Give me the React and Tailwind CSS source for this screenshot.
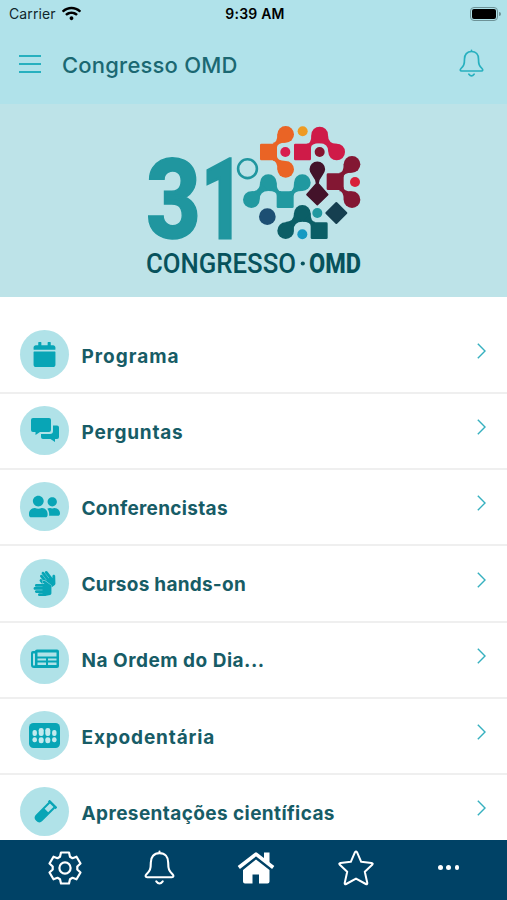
import React from "react";
import { FaCalendar, FaUserFriends, FaWifi, FaSignLanguage } from "react-icons/fa";

function CommentsIcon({ className }) {
  return (
    <svg viewBox="0 0 28 25" fill="currentColor" className={className}>
      <path d="M2 0H18Q20 0 20 2V12Q20 14 18 14H9L4.500 17V14H2Q0 14 0 12V2Q0 0 2 0Z" />
      <path d="M22 7.500H26Q28 7.500 28 9.500V19Q28 21 26 21H24V24L19.500 21H12Q10 21 10 19V16H19Q22 16 22 13Z" />
    </svg>
  );
}

function NewspaperIcon({ className }) {
  return (
    <svg viewBox="0 0 28 20" className={className}>
      <path fill="currentColor" fillRule="evenodd" d="M6 .5H26Q28 .5 28 2.500V17Q28 19 26 19H3Q0 19 0 16V4Q0 2 2 2H4Q4 .5 6 .5ZM6.500 3.500V7.500H25.500V3.500ZM6.500 9.500V11.500H15V9.500ZM17 9.500V11.500H25.500V9.500ZM6.500 13.500V16H15V13.500ZM17 13.500V16H25.500V13.500ZM2 4.500V16Q3 17.300 4 16V4.500Z" />
    </svg>
  );
}

function TeethIcon({ className }) {
  return (
    <svg viewBox="0 0 31 25" className={className}>
      <rect width="31" height="25" rx="4.500" fill="currentColor" />
      <g fill="#c4eaee">
        <rect x="3.500" y="7" width="4.400" height="6" rx="2" />
        <rect x="9.700" y="5" width="5" height="8" rx="2.300" />
        <rect x="16.300" y="5" width="5" height="8" rx="2.300" />
        <rect x="23.100" y="7" width="4.400" height="6" rx="2" />
        <rect x="3.500" y="14.300" width="4.400" height="5" rx="2" />
        <rect x="9.700" y="14.300" width="5" height="6" rx="2.300" />
        <rect x="16.300" y="14.300" width="5" height="6" rx="2.300" />
        <rect x="23.100" y="14.300" width="4.400" height="5" rx="2" />
      </g>
    </svg>
  );
}

function VialIcon({ className }) {
  return (
    <svg viewBox="0 0 24 24" className={className}>
      <g transform="rotate(45 12 12)">
        <path fill="currentColor" fillRule="evenodd" d="M6.500 0H17.500V2.500H16.500V20Q16.500 24.500 12 24.500Q7.500 24.500 7.500 20V2.500H6.500ZM9.500 2.500V10H14.500V2.500Z" />
      </g>
    </svg>
  );
}

function BellIcon({ className, strokeWidth }) {
  return (
    <svg viewBox="-.5 -.5 25 29" fill="none" stroke="currentColor" strokeWidth={strokeWidth} strokeLinecap="round" strokeLinejoin="round" className={className}>
      <path d="M12 .8V2M12 2C7.500 2 5 5.200 5 9.500C5 15 4.300 16.300 1.500 19C.3 20.200 .7 21.500 2 21.500H22C23.300 21.500 23.700 20.200 22.500 19C19.700 16.300 19 15 19 9.500C19 5.200 16.500 2 12 2Z" />
      <path d="M9.400 24.700Q12 28.200 14.600 24.700" />
    </svg>
  );
}

function GearIcon({ className }) {
  return (
    <svg viewBox="-17 -17 34 34" fill="none" stroke="currentColor" strokeWidth="2.200" strokeLinejoin="round" className={className}>
      <path d="M-4 -15.500H4L5 -11.300L7.500 -9.800L11.500 -11.300L15.500 -4.500L12.300 -1.500V1.500L15.500 4.500L11.500 11.300L7.500 9.800L5 11.300L4 15.500H-4L-5 11.300L-7.500 9.800L-11.500 11.300L-15.500 4.500L-12.300 1.500V-1.500L-15.500 -4.500L-11.500 -11.300L-7.500 -9.800L-5 -11.300Z" />
      <circle r="5.600" />
    </svg>
  );
}

function HomeIcon({ className }) {
  return (
    <svg viewBox="0 0 38 32" className={className}>
      <path d="M1.800 15.500L19 2.200L36.200 15.500" fill="none" stroke="currentColor" strokeWidth="3.600" strokeLinejoin="round" />
      <path fill="currentColor" d="M27 .5H32.500V12L27 8ZM19 7.500L32.500 18V29.500Q32.500 31.500 30.500 31.500H22V22.500H15.500V31.500H8Q6 31.500 6 29.500V18Z" />
    </svg>
  );
}

function StarIcon({ className }) {
  return (
    <svg viewBox="0 0 36 36" fill="none" stroke="currentColor" strokeWidth="2" strokeLinejoin="round" className={className}>
      <path d="M17 2.200Q18 .6 19 2.200L23.200 11.800L33.500 13Q35.500 13.300 34.200 14.800L26.800 21.800L29.300 33Q29.400 34.800 27.800 34L18 28.600L8.200 34Q6.600 34.800 6.700 33L9.200 21.800L1.800 14.800Q.5 13.300 2.500 13L12.800 11.800Z" />
    </svg>
  );
}

const items = [
  { label: "Programa", Icon: FaCalendar, size: "size-[25px]", tracking: "tracking-[1px]" },
  { label: "Perguntas", Icon: CommentsIcon, size: "h-[25px] w-[28px]", tracking: "tracking-[0.75px]" },
  { label: "Conferencistas", Icon: FaUserFriends, size: "size-[31px]", tracking: "tracking-[0.3px]" },
  { label: "Cursos hands-on", Icon: FaSignLanguage, size: "size-[25px]", tracking: "tracking-[0.25px]" },
  { label: "Na Ordem do Dia...", Icon: NewspaperIcon, size: "h-[20px] w-[28px]", tracking: "tracking-[0.5px]" },
  { label: "Expodentária", Icon: TeethIcon, size: "h-[25px] w-[31px]", tracking: "tracking-[0.85px]" },
  { label: "Apresentações científicas", Icon: VialIcon, size: "size-[24px]", tracking: "tracking-[0.4px]" },
];

function Square({ x, y }) {
  return <rect x={x - 26} y={y - 25} width="51" height="50" rx="4" />;
}

function Dot({ x, y, r = 15, fill }) {
  return <circle cx={x} cy={y} r={r} fill={fill} />;
}

// A node of the molecule, joined diagonally to a square or to another node.
function Node({ x, y, links = [] }) {
  return (
    <g transform={`translate(${x} ${y})`}>
      <circle r="25" />
      {links.map(([sx, sy, round]) => (
        <path
          key={`${sx}${sy}`}
          transform={`scale(${sx} ${sy})`}
          d={round ? "M25 0Q25 26 51 26L26 51Q26 25 0 25Z" : "M25 0Q25 26 39 26L26 39Q26 25 0 25Z"}
        />
      ))}
    </g>
  );
}

function Logo() {
  return (
    <svg className="block h-full w-full" viewBox="0 104 507 193">
      <g fontFamily="Roboto, 'Liberation Sans', sans-serif" fontWeight="800" fill="#20969f" stroke="#20969f" fontSize="112">
        <text x="146" y="237.800" strokeWidth="1.500" textLength="55" lengthAdjust="spacingAndGlyphs">3</text>
        <text x="201.500" y="237.500" strokeWidth="3" textLength="42" lengthAdjust="spacingAndGlyphs">1</text>
      </g>
      <circle cx="247.500" cy="168.700" r="9.400" fill="none" stroke="#20969f" strokeWidth="2.600" />
      <g fontFamily="Roboto, 'Liberation Sans', sans-serif" fontSize="27.500" fill="#07525c">
        <text x="146" y="273" fontWeight="500" textLength="150" lengthAdjust="spacingAndGlyphs">CONGRESSO</text>
        <circle cx="302.800" cy="263.500" r="2.100" />
        <text x="309" y="273" fontWeight="800" textLength="52" lengthAdjust="spacingAndGlyphs">OMD</text>
      </g>
      <g transform="translate(240 115) scale(.33333)">
        <g fill="#ea6425">
          <Square x={86} y={111} />
          <Node x={137} y={58} links={[[-1, 1]]} />
          <Node x={137} y={163} links={[[-1, -1]]} />
        </g>
        <g fill="#cf1b48">
          <Square x={188} y={111} />
          <Node x={239} y={60} links={[[-1, 1], [1, 1, true]]} />
          <Node x={290} y={111} />
        </g>
        <g fill="#831733">
          <Square x={286} y={200} />
          <Node x={336} y={148} links={[[-1, 1]]} />
          <Node x={336} y={254} links={[[-1, -1]]} />
        </g>
        <g fill="#2199a0">
          <Square x={136} y={254} />
          <Node x={85} y={203} links={[[-1, 1, true], [1, 1]]} />
          <Node x={34} y={254} />
          <Node x={187} y={203} links={[[-1, 1]]} />
        </g>
        <g fill="#0b5e66">
          <Square x={238} y={347} />
          <Node x={187} y={295} links={[[-1, 1, true], [1, 1]]} />
          <Node x={137} y={347} />
        </g>
        <path fill="#43132a" stroke="#43132a" strokeWidth="5" strokeLinejoin="round" d="M211 163A21 21 0 0 1 253 163C253 180 234 184 234 206L263 239L232 269L201 239L230 206C230 184 211 180 211 163Z" />
        <path fill="#163f50" stroke="#163f50" strokeWidth="6" strokeLinejoin="round" d="M289 264L319 294L289 324L259 294Z" />
        <Dot x={188} y={49} fill="#ee9b23" />
        <Dot x={136} y={111} fill="#d81e50" />
        <Dot x={239} y={111} fill="#85142f" />
        <Dot x={345} y={201} fill="#d8203a" />
        <Dot x={232} y={294} fill="#2199a0" />
        <Dot x={187} y={358} fill="#169ac2" />
        <Dot x={82} y={305} r={25} fill="#1d4f73" />
      </g>
    </svg>
  );
}

export default function App() {
  return (
    <div className="flex h-[900px] w-[507px] flex-col overflow-hidden bg-white font-['Inter','Liberation_Sans',sans-serif]">
      <header className="h-[104px] shrink-0 bg-[#b0e2ea]">
        <div className="grid h-[27px] grid-cols-3 items-center pl-[9px] pr-[6px] text-[14px] text-[#10272c]">
          <div className="flex items-center gap-[6px]">
            <span className="tracking-[0.1px]">Carrier</span>
            <FaWifi className="h-[17px] w-[19px] text-black" />
          </div>
          <span className="text-center font-semibold tracking-[0.2px] text-black">9:39 AM</span>
          <div className="flex items-center justify-end">
            <div className="h-[14px] w-[28px] rounded-[4px] border border-[#6d9297] p-px">
              <div className="h-full rounded-[2px] bg-black" />
            </div>
            <div className="ml-px h-1 w-[2px] rounded-r bg-[#6d9297]" />
          </div>
        </div>
        <div className="flex h-[73px] items-center pl-[19px] pr-[23px]">
          <div className="flex w-[22px] flex-col gap-[6px]">
            <i className="h-[2px] bg-[#27b0bf]" />
            <i className="h-[2px] bg-[#27b0bf]" />
            <i className="h-[2px] bg-[#27b0bf]" />
          </div>
          <h1 className="ml-[21px] mt-[3px] flex-1 whitespace-nowrap text-[22px] font-medium tracking-[0.2px] text-[#1b6872]">Congresso OMD</h1>
          <BellIcon strokeWidth="1.7" className="h-[29px] w-[25px] text-[#27b0bf]" />
        </div>
      </header>
      <section className="h-[193px] shrink-0 bg-[#bde3e8]">
        <Logo />
      </section>
      <main className="min-h-0 flex-1 overflow-hidden pt-[21px]">
        {items.map(({ label, Icon, size, tracking }) => (
          <div key={label} className="flex h-[76.17px] items-center border-b-2 border-[#efefef] pl-5 pr-[21px]">
            <div className="-mt-px flex size-[49px] items-center justify-center rounded-full bg-[#b0e2e8]">
              <Icon className={`${size} text-[#08a5b6]`} />
            </div>
            <span className={`ml-[12.5px] mt-[4px] flex-1 whitespace-nowrap text-[19px] font-bold text-[#175c66] ${tracking}`}>{label}</span>
            <svg viewBox="0 0 9 16" fill="none" stroke="currentColor" strokeWidth="1.400" className="-mt-[8px] h-4 w-[9px] text-[#36b0bf]">
              <path d="M.8 .8L8 8L.8 15.200" />
            </svg>
          </div>
        ))}
      </main>
      <nav className="flex h-[60px] shrink-0 items-center bg-[#004266] pb-[5px] pl-[48px] text-white">
        <GearIcon className="size-[34px]" />
        <BellIcon strokeWidth="1.7" className="ml-[62px] h-[36px] w-[31px]" />
        <HomeIcon className="ml-[62px] h-8 w-[38px]" />
        <StarIcon className="ml-[63px] size-9" />
        <div className="ml-[64px] flex w-[21px] justify-between">
          <i className="size-[4.5px] rounded-full bg-white" />
          <i className="size-[4.5px] rounded-full bg-white" />
          <i className="size-[4.5px] rounded-full bg-white" />
        </div>
      </nav>
    </div>
  );
}
